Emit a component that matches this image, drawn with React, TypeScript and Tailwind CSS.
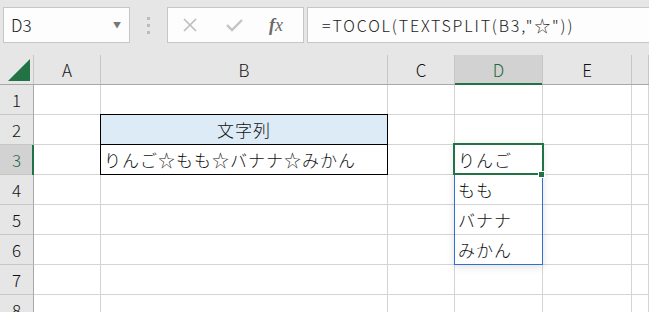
import React from "react";

const FONT = { fontFamily: '"Noto Sans CJK JP", "Noto Sans", sans-serif' };

const cols = [
  { key: "A", w: "w-[67px]" },
  { key: "B", w: "w-[287px]" },
  { key: "C", w: "w-[67px]" },
  { key: "D", w: "w-[88px]" },
  { key: "E", w: "w-[89px]" },
  { key: "", w: "flex-1" },
];

const data: Record<string, string> = {
  B2: "文字列",
  B3: "りんご☆もも☆バナナ☆みかん",
  D3: "りんご",
  D4: "もも",
  D5: "バナナ",
  D6: "みかん",
};

function Toolbar() {
  return (
    <div className="flex h-[55px] items-start bg-[#e6e6e6] pt-[7px] pl-[3px]">
      {/* name box */}
      <div className="flex h-[36px] w-[127px] items-center justify-between border border-[#c6c6c6] bg-[#fdfdfd] pl-[7px] pr-[8px]">
        <span className="text-[17px] font-light text-[#222]">D3</span>
        <span className="text-[8px] text-[#777]">▼</span>
      </div>
      {/* grip dots */}
      <div className="flex w-[37px] flex-col items-center gap-[4px] pt-[10px]">
        <span className="h-[3px] w-[3px] bg-[#bcbcbc]" />
        <span className="h-[3px] w-[3px] bg-[#bcbcbc]" />
        <span className="h-[3px] w-[3px] bg-[#bcbcbc]" />
      </div>
      {/* cancel / enter / fx */}
      <div className="flex h-[36px] w-[137px] items-center border border-[#c6c6c6] bg-[#fdfdfd] pl-[14px]">
        <svg width="16" height="16" viewBox="0 0 16 16" className="mr-[28px]">
          <path d="M2 2L14 14M14 2L2 14" stroke="#bdbdbd" strokeWidth="1.6" fill="none" />
        </svg>
        <svg width="17" height="14" viewBox="0 0 17 14" className="mr-[26px]">
          <path d="M1 7L6 12L16 2" stroke="#c4c4c4" strokeWidth="2.4" fill="none" />
        </svg>
        <span
          className="text-[18px] italic text-[#6a6a6a]"
          style={{ fontFamily: '"Liberation Serif", serif' }}
        >
          <span className="font-bold">f</span>x
        </span>
      </div>
      {/* formula bar */}
      <div className="ml-[3px] flex h-[36px] flex-1 items-center border border-r-0 border-[#c6c6c6] bg-[#fdfdfd] pl-[14px]">
        <span className="text-[16px] font-light tracking-[1.85px] text-[#222]">=TOCOL(TEXTSPLIT(B3,"☆"))</span>
      </div>
    </div>
  );
}

function HeaderRow() {
  return (
    <div className="flex h-[30px] border-b border-[#a8a8a8] bg-[#e6e6e6]">
      <div className="flex w-[34px] items-end justify-end border-r border-[#c6c6c6] pr-[3px] pb-[3px]">
        <svg width="22" height="22" viewBox="0 0 22 22">
          <polygon points="22,0 22,22 0,22" fill="#217346" />
        </svg>
      </div>
      {cols.map((c) => {
        const sel = c.key === "D";
        return (
          <div
            key={c.key || "rest"}
            className={
              sel
                ? `${c.w} relative flex items-center justify-center border-r border-[#c6c6c6] bg-[#d2d2d2] text-[17px] font-light text-[#1e6b40]`
                : `${c.w} flex items-center justify-center border-r border-[#c6c6c6] text-[17px] font-light text-[#111]`
            }
          >
            {c.key}
            {sel && <span className="absolute bottom-[-1px] left-0 right-0 h-[2px] bg-[#217346]" />}
          </div>
        );
      })}
    </div>
  );
}

function Row({ n }: { n: number }) {
  const sel = n === 3;
  return (
    <div className="flex h-[30px]">
      <div
        className={
          sel
            ? "relative flex w-[34px] items-center justify-center border-b border-r border-b-[#c6c6c6] border-r-[#a8a8a8] bg-[#d2d2d2] text-[17px] font-light text-[#1e6b40]"
            : "flex w-[34px] items-center justify-center border-b border-r border-b-[#c6c6c6] border-r-[#a8a8a8] bg-[#e6e6e6] text-[17px] font-light text-[#111]"
        }
      >
        {n}
        {sel && <span className="absolute top-0 bottom-[-1px] right-[-1px] w-[2px] bg-[#217346]" />}
      </div>
      {cols.map((c) => {
        const id = `${c.key}${n}`;
        const text = data[id];
        const isHead = id === "B2";
        return (
          <div
            key={id}
            className={
              isHead
                ? `${c.w} flex items-center justify-center border-b border-r border-[#d4d4d4] bg-[#ddebf7] pt-[1px] text-[17px] font-light tracking-[1px] text-[#111]`
                : `${c.w} flex items-center whitespace-nowrap border-b border-r border-[#d4d4d4] bg-white pl-[3px] pt-[1px] text-[17px] font-light tracking-[1px] text-[#111]`
            }
          >
            {text}
          </div>
        );
      })}
    </div>
  );
}

export default function App() {
  return (
    <div className="h-[312px] w-[649px] overflow-hidden bg-white" style={FONT}>
      <Toolbar />
      <div className="relative">
        <HeaderRow />
        {[1, 2, 3, 4, 5, 6, 7, 8].map((n) => (
          <Row key={n} n={n} />
        ))}

        {/* B2:B3 black box */}
        <div className="pointer-events-none absolute left-[100px] top-[59px] h-[61px] w-[288px] border border-black" />
        <div className="pointer-events-none absolute left-[100px] top-[89px] h-[1px] w-[288px] bg-black" />

        {/* spill range */}
        <div className="pointer-events-none absolute left-[454px] top-[88px] h-[122px] w-[89px] border border-[#2f6fd0] shadow-[0_2px_8px_rgba(0,0,0,0.12)]" />

        {/* active cell */}
        <div className="pointer-events-none absolute left-[453px] top-[88px] h-[32px] w-[91px] border-2 border-[#217346]" />
        <div className="pointer-events-none absolute left-[538px] top-[116px] h-[7px] w-[7px] border border-white bg-[#217346]" />
      </div>
    </div>
  );
}
